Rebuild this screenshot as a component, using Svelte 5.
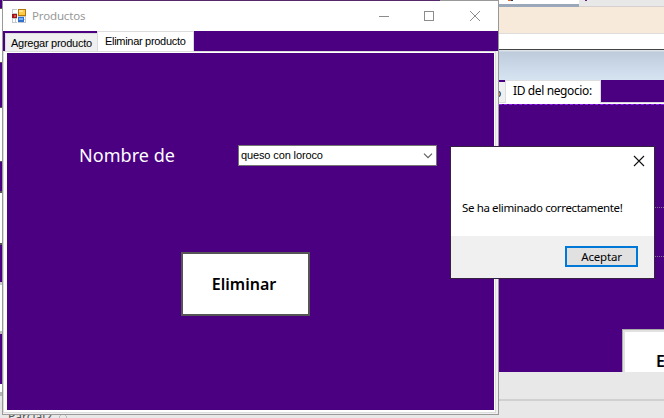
<script>
  const leftEdge = [
    [8, '#4b0082'], [1, '#555'], [53, '#fff'], [1, '#555'], [44, '#4b0082'], [1, '#555'], [53, '#fff'], [1, '#555'],
    [29, '#4b0082'], [2, '#555'], [50, '#fff'], [2, '#555'], [37, '#4b0082'], [3, '#ccc'], [46, '#fff'],
    [3, '#bbb'], [50, '#4b0082'], [8, '#fff'], [4, '#b5b5b5'], [6, '#e8e8e8'], [16, '#e4e4e4']
  ];
</script>

<div class="desktop">
  <div class="edge">
    {#each leftEdge as [h, c]}<i style="height:{h}px;background:{c}"></i>{/each}
  </div>

  <div class="back">
    <div class="ribbon"><i class="active"></i><svg class="marks" width="85" height="2" viewBox="0 0 85 2"><path d="M0 .5H3" stroke="#d9692b" /><path d="M3 .5H5" stroke="#1e3a6e" /><path d="M77 .5H79" stroke="#68217a" /></svg></div>
    <div class="peach"></div>
    <div class="blank"></div>
    <div class="bluebar"></div>
    <div class="backtabs">
      <div class="stub">o</div>
      <div class="idtab"><span class="t id">ID del negocio:</span></div>
    </div>
    <div class="backpage">
      <i class="dots one"></i>
      <i class="dots two"></i>
      <div class="backbtn"><span class="t">Eliminar</span></div>
    </div>
    <div class="statusline"></div>
    <div class="status"></div>
  </div>

  <div class="taskbar"><span>Parcial2</span><svg width="10" height="10" viewBox="0 0 10 10"><path d="M1 5L5 1L9 5L5 9Z" fill="none" stroke="#bbb" /></svg></div>

  <section class="window">
    <div class="topline"></div>
    <header>
      <svg class="logo" width="14" height="14" viewBox="0 0 14 14" shape-rendering="crispEdges">
        <rect x="0" y="0" width="14" height="14" fill="#c3c8ce" />
        <path d="M1 1H5V4H1ZM1 10H3V13H1ZM3.6 10H5V13H3.6ZM12 8H13V10H12ZM12 11H13V13H12Z" fill="#fff" />
        <rect x="5" y="0" width="1" height="14" fill="#fff" />
        <rect x="6" y="0" width="8" height="7" fill="#b5770c" />
        <rect x="7" y="1" width="6" height="5" fill="#ffcb45" />
        <rect x="7" y="1" width="4" height="2" fill="#ffe596" />
        <rect x="0" y="5" width="5" height="4" fill="#9c1414" />
        <rect x="2" y="6" width="2" height="2" fill="#e4574a" />
        <rect x="6" y="8" width="6" height="5" fill="#2f6fd0" />
        <rect x="7" y="9" width="4" height="2" fill="#79aff5" />
      </svg>
      <span class="t title">Productos</span>
      <svg class="controls" width="104" height="12" viewBox="0 0 104 12" fill="none" stroke="#8c8c8c">
        <path d="M0 6.5H10" />
        <rect x="45.5" y="1.5" width="9" height="9" />
        <path d="M91 1L101 11M101 1L91 11" />
      </svg>
    </header>
    <nav>
      <div class="tab idle"><span class="t">Agregar producto</span></div>
      <div class="tab on"><span class="t">Eliminar producto</span></div>
    </nav>
    <main>
      <div class="page">
        <div class="row">
          <span class="t label">Nombre de</span>
          <div class="combo">
            <span class="t value">queso con loroco</span>
            <svg width="10" height="6" viewBox="0 0 10 6"><path d="M1 .7L5 4.7L9 .7" fill="none" stroke="#606060" stroke-width="1.2" /></svg>
          </div>
        </div>
        <button class="delete"><span class="t">Eliminar</span></button>
      </div>
    </main>
  </section>

  <section class="dialog">
    <div class="body">
      <svg width="12" height="12" viewBox="0 0 12 12"><path d="M1 1L11 11M11 1L1 11" stroke="#111" stroke-width="1.1" /></svg>
      <span class="t msg">Se ha eliminado correctamente!</span>
    </div>
    <footer><button class="ok"><span class="t">Aceptar</span></button></footer>
  </section>
</div>

<style>
  .desktop { position: relative; width: 664px; height: 418px; overflow: hidden; background: #e8e8e8; font-family: "Noto Sans", sans-serif; color: #000; }
  .desktop * { box-sizing: border-box; }
  i { display: block; flex: none; }
  .t { display: block; white-space: nowrap; }
  button { padding: 0; margin: 0; font-family: inherit; color: inherit; border-radius: 0; display: flex; align-items: center; justify-content: center; }

  .edge { position: absolute; left: 0; top: 0; width: 3px; display: flex; flex-direction: column; }
  .back { position: absolute; left: 499px; top: 0; width: 165px; height: 418px; display: flex; flex-direction: column; }
  .back > div { flex: none; }
  .ribbon { height: 7px; display: flex; border-bottom: 1px solid #d4d1ce; background: #e8e8e8; }
  .active { width: 80px; height: 7px; background: #fff; border-bottom: 3px solid #9ba8b9; }
  .marks { margin-left: -71px; }
  .peach { height: 27px; background: #f8eadb; border-bottom: 1px solid #ddd; }
  .blank { height: 16px; background: #fff; border-bottom: 1px solid #454545; }
  .bluebar { height: 30px; background: linear-gradient(#dce3e9 0 1px, #bdcbdb 2px, #d6e4f2); }
  .backtabs { height: 24px; background: #4b0082; display: flex; align-items: flex-end; border-bottom: 1px solid #fff; box-shadow: inset 0 -1px #d9d9d9; }
  .stub { width: 6px; height: 21px; background: #f0f0f0; border-bottom: 1px solid #ddd; overflow: hidden; font: 11px/22px "Liberation Sans", sans-serif; text-indent: -4px; }
  .idtab { width: 96px; height: 23px; background: #fff; border: 1px solid #ddd; border-bottom: 0; padding-left: 7px; }
  .id { font-size: 12px; line-height: 20px; letter-spacing: -.38px; }
  .backpage { position: relative; height: 268px; background: #4b0082; overflow: hidden; border-top: 1px dashed #9320f5; }
  .dots { position: absolute; right: 0; width: 10px; border-top: 1px dotted #87738f; }
  .one { top: 102px; }
  .two { top: 151px; }
  .backbtn { position: absolute; left: 123px; top: 224px; width: 128px; height: 64px; background: #fff; border: 1px solid #aaa; box-shadow: inset 0 0 0 2px #e1e1e1; padding: 20px 0 0 33px; font-size: 16px; line-height: 22px; font-weight: 600; }
  .statusline { height: 29px; border-bottom: 2px solid #d0d0d0; }
  .status { flex: 1; }
  .taskbar { position: absolute; left: 0; top: 409px; width: 499px; height: 16px; padding-left: 8px; display: flex; gap: 6px; align-items: center; background: #e8e8e8; color: #555; font-size: 12px; line-height: 14px; }

  .window { position: absolute; left: 2px; top: 0; width: 497px; height: 415px; display: flex; flex-direction: column; background: #f0f0f0; border: 1px solid #999; border-top: 0; }
  .topline { height: 1px; flex: none; background: linear-gradient(90deg, #54286a 437px, #999 437px); }
  header { height: 30px; flex: none; display: flex; align-items: center; padding-left: 9px; background: #fff; }
  .logo { margin-top: -1px; }
  .title { margin-left: 6px; font-size: 11.5px; line-height: 16px; color: #999; letter-spacing: -.15px; width: 60px; }
  .controls { margin-left: 287px; }
  nav { height: 20px; flex: none; background: #4b0082; display: flex; align-items: flex-end; font: 11px/16px "Liberation Sans", sans-serif; }
  .tab { border: 1px solid #dcdcdc; border-bottom: 0; letter-spacing: -.26px; }
  .idle { width: 92px; height: 18px; background: #f0f0f0; margin-left: 2px; padding: 1px 0 0 5px; border-right: 0; }
  .on { width: 97px; height: 20px; background: #fff; padding: 1px 0 0 7px; letter-spacing: -.3px; }
  main { flex: 1; margin: 0 2px 1px 0; background: #fff; border: 1px solid #dcdcdc; padding: 1px 1px 2px 3px; display: flex; }
  .page { flex: 1; background: #4b0082; display: flex; flex-direction: column; align-items: flex-start; }
  .row { display: flex; align-items: center; padding-left: 72px; margin-top: 92px; height: 21px; }
  .label { color: #fff; font-size: 18px; line-height: 22px; width: 159px; letter-spacing: .05px; position: relative; top: -1px; }
  .combo { width: 199px; height: 21px; background: #fff; border: 1px solid #747474; display: flex; align-items: center; justify-content: space-between; padding: 0 3px 0 2px; }
  .value { font: 11px/18px "Liberation Sans", sans-serif; letter-spacing: -.12px; padding-bottom: 1px; }
  .delete { margin: 86px 0 0 174px; width: 129px; height: 64px; background: #fff; border: 2px solid #555; font-size: 16px; line-height: 22px; font-weight: 600; padding-right: 3px; }

  .dialog { position: absolute; left: 450px; top: 146px; width: 205px; height: 133px; border: 1px solid #34203f; background: #fff; display: flex; flex-direction: column; }
  .body { height: 89px; padding: 8px 9px 0 11px; display: flex; flex-direction: column; }
  .body svg { align-self: flex-end; }
  .msg { margin-top: 33px; font-size: 11.5px; line-height: 16px; letter-spacing: -.37px; }
  footer { flex: 1; background: #f0f0f0; display: flex; justify-content: flex-end; align-items: flex-start; padding: 10px 16px 0 0; }
  .ok { width: 73px; height: 21px; border: 2px solid #0078d7; background: #e1e1e1; font-size: 11.5px; line-height: 16px; letter-spacing: -.2px; }
</style>
